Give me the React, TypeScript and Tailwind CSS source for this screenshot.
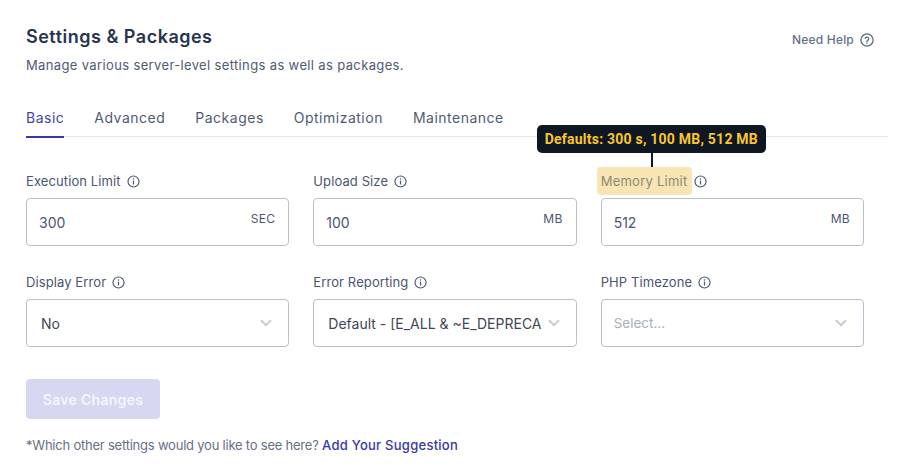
import { ChevronDown } from "lucide-react";
import type { ReactNode } from "react";

function InfoIcon() {
  return (
    <svg viewBox="0 0 16 16" fill="none" className="h-[13px] w-[13px]">
      <circle cx="8" cy="8" r="6.8" stroke="currentColor" strokeWidth="1.4" />
      <path d="M8 7.4v3.6" stroke="currentColor" strokeWidth="1.5" strokeLinecap="round" />
      <circle cx="8" cy="5" r="0.95" fill="currentColor" />
    </svg>
  );
}

function HelpIcon() {
  return (
    <svg viewBox="0 0 16 16" fill="none" className="h-[14px] w-[14px] text-[#5f6b80]">
      <circle cx="8" cy="8" r="7" stroke="currentColor" strokeWidth="1.5" />
      <path
        d="M5.9 6.2a2.1 2.1 0 0 1 4.1.6c0 1.4-2 1.7-2 2.9"
        stroke="currentColor"
        strokeWidth="1.5"
        strokeLinecap="round"
      />
      <circle cx="8" cy="11.8" r="0.85" fill="currentColor" />
    </svg>
  );
}

function Label({ children }: { children: ReactNode }) {
  return (
    <div className="flex h-[24px] items-center gap-[6px] pt-[1px] text-[13px] tracking-[0.1px] text-[#4a5670]">
      <span>{children}</span>
      <InfoIcon />
    </div>
  );
}

function UnitInput({ value, unit }: { value: string; unit: string }) {
  return (
    <div className="flex h-[48px] items-start justify-between rounded border border-[#b9c0cc] bg-white pl-[12px] pr-[13px]">
      <span className="mt-[13px] text-[14px] text-[#4a5670]">{value}</span>
      <span className="mt-[11px] text-[12px] tracking-[0.3px] text-[#4a5670]">{unit}</span>
    </div>
  );
}

function SelectBox({ value, placeholder }: { value: string; placeholder?: boolean }) {
  return (
    <div className="flex h-[48px] items-center justify-between rounded border border-[#b9c0cc] bg-white pl-[14px] pr-[13px]">
      <span
        className={
          placeholder
            ? "-ml-[2px] text-[13.5px] text-[#a8aeb9]"
            : "whitespace-nowrap text-[14px] text-[#3f4654]"
        }
      >
        {value}
      </span>
      <ChevronDown className="h-[18px] w-[18px] shrink-0 text-[#c9c9c9]" strokeWidth={2.4} />
    </div>
  );
}

export default function App() {
  const tabs = ["Basic", "Advanced", "Packages", "Optimization", "Maintenance"];

  return (
    <div
      className="h-[470px] w-[920px] overflow-hidden bg-white pl-[26px] pr-[32px] pt-[25px]"
      style={{ fontFamily: '"Inter", "Noto Sans", sans-serif' }}
    >
      <div className="flex items-start justify-between">
        <div>
          <h1 className="text-[18px] leading-[24px] font-semibold tracking-[0.5px] text-[#27344f]">
            Settings &amp; Packages
          </h1>
          <p className="mt-[6px] text-[13px] leading-[20px] tracking-[0.36px] text-[#4f5b73]">
            Manage various server-level settings as well as packages.
          </p>
        </div>
        <div className="mr-[14px] mt-[6px] flex items-center gap-[6px] text-[12px] font-medium tracking-[0.2px] text-[#667085]">
          Need Help
          <HelpIcon />
        </div>
      </div>

      <div className="mt-[24px] flex h-[38px] gap-[30px] border-b border-[#e2e5ea]">
        {tabs.map((tab, i) => (
          <div
            key={tab}
            className={`-mb-px h-[39px] pt-[9px] text-[14px] leading-[20px] tracking-[0.5px] ${
              i === 0 ? "border-b-2 border-[#3538a8] text-[#3f43b0]" : "text-[#4f5b73]"
            }`}
          >
            {tab}
          </div>
        ))}
      </div>

      <div className="mr-[24px] mt-[32px] grid grid-cols-3 gap-x-[24px] gap-y-[24px]">
        <div>
          <Label>Execution Limit</Label>
          <div className="mt-[5px]">
            <UnitInput value="300" unit="SEC" />
          </div>
        </div>
        <div>
          <Label>Upload Size</Label>
          <div className="mt-[5px]">
            <UnitInput value="100" unit="MB" />
          </div>
        </div>
        <div>
          <div className="relative">
            <Label>
              <span className="-mx-[4px] rounded-sm bg-[#f9e4b4] px-[4px] pb-[6px] pt-[6px] tracking-[0.25px] text-[#8a8a78]">
                Memory Limit
              </span>
            </Label>
            <div
              className="absolute -left-[64px] -top-[44px] z-10 flex h-[28px] items-center rounded-[5px] bg-[#0f1723] px-[8px] text-[14px] font-bold tracking-[0.23px] whitespace-nowrap text-[#fac62e]"
              style={{ fontFamily: '"Roboto", "Liberation Sans", sans-serif' }}
            >
              Defaults: 300 s, 100 MB, 512 MB
            </div>
            <div className="absolute left-[50px] -top-[16px] h-[14px] w-[2px] bg-[#0f1723]" />
          </div>
          <div className="mt-[5px]">
            <UnitInput value="512" unit="MB" />
          </div>
        </div>
        <div>
          <Label>Display Error</Label>
          <div className="mt-[5px]">
            <SelectBox value="No" />
          </div>
        </div>
        <div>
          <Label>Error Reporting</Label>
          <div className="mt-[5px]">
            <SelectBox value="Default - [E_ALL & ~E_DEPRECA" />
          </div>
        </div>
        <div>
          <Label>PHP Timezone</Label>
          <div className="mt-[5px]">
            <SelectBox value="Select..." placeholder />
          </div>
        </div>
      </div>

      <button
        type="button"
        className="mt-[32px] block h-[40px] w-[134px] rounded bg-[#d6d7f1] text-[14px] font-semibold tracking-[0.3px] text-[#f5f5fc]"
      >
        Save Changes
      </button>

      <p className="mt-[16px] text-[13px] leading-[20px] tracking-[-0.22px] text-[#667085]">
        *Which other settings would you like to see here?{" "}
        <span className="font-medium tracking-[0.26px] text-[#3538a8]">Add Your Suggestion</span>
      </p>
    </div>
  );
}
